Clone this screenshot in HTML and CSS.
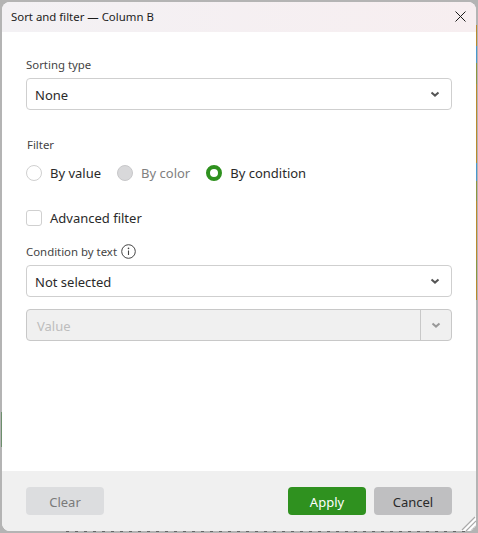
FILE: index.html
```html
<!DOCTYPE html>
<html lang="en">
<head>
    <meta charset="UTF-8">
    <title>Sort and filter</title>
    <link rel="stylesheet" href="styles.css">
</head>
<body>
    <div class="dialog">
        <div class="title-bar">
            <span class="title">Sort and filter — Column B</span>
            <svg class="close" width="11" height="11" viewBox="0 0 11 11">
                <path d="M0.5 0.5L10.5 10.5M10.5 0.5L0.5 10.5" stroke="#1a1a1a" stroke-width="1" fill="none"/>
            </svg>
        </div>

        <div class="content">
            <div class="label sort-label">Sorting type</div>
            <div class="select">
                <span>None</span>
                <svg class="chevron" width="10" height="7" viewBox="0 0 10 7">
                    <path d="M1.5 1.5L5 4.6L8.5 1.5" stroke="#555" stroke-width="2" fill="none"/>
                </svg>
            </div>

            <div class="label filter-label">Filter</div>
            <div class="radio-row">
                <div class="radio-item">
                    <span class="radio"></span>
                    <span>By value</span>
                </div>
                <div class="radio-item disabled">
                    <span class="radio"></span>
                    <span>By color</span>
                </div>
                <div class="radio-item selected">
                    <span class="radio"></span>
                    <span>By condition</span>
                </div>
            </div>

            <div class="check-row">
                <span class="checkbox"></span>
                <span>Advanced filter</span>
            </div>

            <div class="label condition-label">
                <span>Condition by text</span>
                <svg width="15" height="15" viewBox="0 0 15 15">
                    <circle cx="7.5" cy="7.5" r="6.8" stroke="#444" fill="none"/>
                    <path d="M7.5 6.5V11" stroke="#444" stroke-width="1.1"/>
                    <circle cx="7.5" cy="4.4" r="0.8" fill="#444"/>
                </svg>
            </div>
            <div class="select">
                <span>Not selected</span>
                <svg class="chevron" width="10" height="7" viewBox="0 0 10 7">
                    <path d="M1.5 1.5L5 4.6L8.5 1.5" stroke="#555" stroke-width="2" fill="none"/>
                </svg>
            </div>

            <div class="value-box">
                <div class="value-text">Value</div>
                <div class="value-arrow">
                    <svg width="10" height="7" viewBox="0 0 10 7">
                        <path d="M1.5 1.5L5 4.6L8.5 1.5" stroke="#999" stroke-width="2" fill="none"/>
                    </svg>
                </div>
            </div>
        </div>

        <div class="footer">
            <button class="btn btn-clear">Clear</button>
            <div class="footer-right">
                <button class="btn btn-apply">Apply</button>
                <button class="btn btn-cancel">Cancel</button>
            </div>
        </div>

        <svg class="grip" width="15" height="15" viewBox="0 0 15 15">
            <path d="M15 0V15H0Z" fill="#fff"/>
            <path d="M14 1L1 14M15 5L5 15M15 10L10 15" stroke="#aaa" stroke-width="1.2"/>
        </svg>
    </div>
</body>
</html>
```

FILE: styles.css
```css
body {
    margin: 0;
    padding: 2px;
    box-sizing: border-box;
    height: 533px;
    overflow: hidden;
    background-color: #b4b4b4;
    /* bits of the spreadsheet that show behind the dialog */
    background-image:
        linear-gradient(to bottom,
            transparent 25px,
            #b98a2e 25px, #b98a2e 46px,
            #4a97cf 46px, #4a97cf 63px,
            #8f9440 63px, #8f9440 84px,
            #b98a2e 84px, #b98a2e 163px,
            #4a97cf 163px, #4a97cf 181px,
            #8f9440 181px, #8f9440 201px,
            #b98a2e 201px, #b98a2e 260px,
            #8f9440 260px, #8f9440 280px,
            #b98a2e 280px, #b98a2e 300px,
            transparent 300px),
        linear-gradient(to bottom,
            transparent 412px,
            #6d8f6d 412px, #6d8f6d 447px,
            transparent 447px),
        repeating-linear-gradient(to right,
            #666 0, #666 3px, #b4b4b4 3px, #b4b4b4 9px);
    background-size: 1px 533px, 1px 533px, 400px 1px;
    background-position: 476px 0, 1px 0, 66px 531px;
    background-repeat: no-repeat;
    font-family: "Noto Sans", sans-serif;
    font-size: 13px;
    color: #2a2a2a;
}

.dialog {
    position: relative;
    display: flex;
    flex-direction: column;
    height: 529px;
    background-color: white;
    border-radius: 8px;
    overflow: hidden;
}

.title-bar {
    display: flex;
    justify-content: space-between;
    align-items: center;
    flex: none;
    box-sizing: border-box;
    height: 30px;
    padding: 0 10px 2px 9px;
    background: linear-gradient(to right, #f3f1f4, #f7eef0);
}

.title {
    font-size: 11.4px;
    color: #1c1c1c;
}

.content {
    flex: 1;
    padding: 0 24px;
}

.label {
    font-size: 11.4px;
    color: #444;
}

.sort-label {
    margin-top: 24px;
    height: 22px;
    line-height: 17px;
}

.filter-label {
    margin-top: 26px;
    margin-left: 1px;
    line-height: 17px;
}

.select {
    display: flex;
    justify-content: space-between;
    align-items: center;
    box-sizing: border-box;
    height: 32px;
    padding: 2px 11px 0 8px;
    background-color: white;
    border: 1px solid #cfcfcf;
    border-radius: 4px;
    font-size: 13px;
}

.chevron {
    margin-top: -1px;
}

.radio-row {
    display: flex;
    gap: 16px;
    margin-top: 11px;
}

.radio-item {
    display: flex;
    align-items: center;
    gap: 8px;
    height: 17px;
}

.radio {
    box-sizing: border-box;
    width: 16px;
    height: 16px;
    border: 1px solid #d0d0d0;
    border-radius: 50%;
}

.radio-item.disabled {
    color: #808080;
}

.radio-item.disabled .radio {
    background-color: #d8d8da;
    border-color: #c8c8ca;
}

.radio-item.selected .radio {
    border: 4px solid #2f911f;
}

.check-row {
    display: flex;
    align-items: center;
    gap: 8px;
    margin-top: 28px;
    height: 17px;
}

.checkbox {
    box-sizing: border-box;
    width: 16px;
    height: 16px;
    border: 1px solid #d0d0d0;
    border-radius: 3px;
}

.condition-label {
    display: flex;
    align-items: center;
    gap: 4px;
    margin-top: 14px;
    height: 22px;
    padding-bottom: 3px;
}

.value-box {
    display: flex;
    box-sizing: border-box;
    height: 32px;
    margin-top: 12px;
    background-color: #f0f0f0;
    border: 1px solid #c8c8c8;
    border-radius: 4px;
}

.value-text {
    flex: 1;
    padding-left: 10px;
    line-height: 32px;
    color: #bdbdbd;
    border-right: 1px solid #c8c8c8;
}

.value-arrow {
    display: flex;
    justify-content: center;
    align-items: center;
    width: 30px;
}

.footer {
    display: flex;
    justify-content: space-between;
    flex: none;
    height: 60px;
    box-sizing: border-box;
    padding: 16px 24px;
    background-color: #f0f0f0;
}

.footer-right {
    display: flex;
    gap: 8px;
}

.btn {
    width: 78px;
    height: 28px;
    padding: 2px 0 0;
    border: none;
    border-radius: 4px;
    font-family: inherit;
    font-size: 13px;
}

.btn-clear {
    background-color: #dcdddf;
    color: #7a7a7a;
}

.btn-apply {
    background-color: #2f911f;
    color: white;
}

.btn-cancel {
    background-color: #bfbfc1;
    color: #2a2a2a;
}

.grip {
    position: absolute;
    right: 0;
    bottom: 0;
}
```
